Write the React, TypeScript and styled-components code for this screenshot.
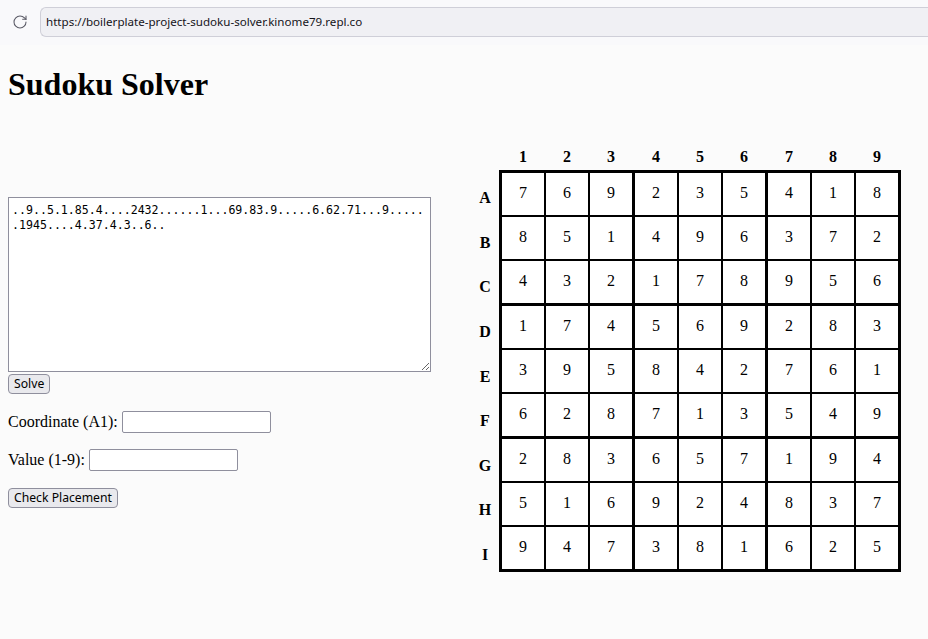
import * as React from "react";
import styled, { createGlobalStyle } from "styled-components";
import { RotateCw } from "lucide-react";

const GlobalStyle = createGlobalStyle`
  body {
    margin: 0;
    background: #fbfbfb;
    font-family: "Liberation Serif", "Times New Roman", serif;
    color: #000;
  }
`;

const PUZZLE =
  "..9..5.1.85.4....2432......1...69.83.9.....6.62.71...9......1945....4.37.4.3..6..";

const SOLUTION = [
  "769235418",
  "851496372",
  "432178956",
  "174569283",
  "395842761",
  "628713549",
  "283657194",
  "516924837",
  "947381625",
];

const ROWS = "ABCDEFGHI".split("");

const BrowserBar = styled.div`
  display: flex;
  align-items: center;
  gap: 12px;
  height: 45px;
  padding: 0 0 2px 12px;
  box-sizing: border-box;
  background: #f9f9fb;
  color: #5b5b66;
`;

const UrlBox = styled.div`
  flex: 1;
  height: 28px;
  display: flex;
  align-items: center;
  padding-left: 5px;
  border: 1px solid #cfcfd8;
  border-right: none;
  border-radius: 6px 0 0 6px;
  background: #f0f0f4;
  font-family: "Noto Sans", sans-serif;
  font-size: 11.6px;
  color: #15141a;
`;

const Page = styled.div`
  padding: 0 8px;
`;

const Title = styled.h1`
  font-size: 32px;
  font-weight: bold;
  margin: 21.44px 0;
`;

const Main = styled.div`
  display: flex;
  align-items: flex-start;
  gap: 44px;
`;

const FormColumn = styled.div`
  width: 423px;
  padding-top: 72px;
`;

const PuzzleInput = styled.textarea`
  display: block;
  width: 423px;
  height: 175px;
  box-sizing: border-box;
  padding: 5px 3px 2px;
  border: 1px solid #8f8f9d;
  background: #fff;
  font-family: "DejaVu Sans Mono", monospace;
  font-size: 11.6px;
  line-height: 15px;
  color: #000;
  line-break: anywhere;
  word-break: break-all;
`;

const Button = styled.button<{ $top: number }>`
  display: block;
  margin-top: ${(p) => p.$top}px;
  height: 20px;
  padding: 0 5px;
  border: 1px solid #8f8f9d;
  border-radius: 4px;
  background: #e9e9ed;
  font-family: "Noto Sans", sans-serif;
  font-size: 12.2px;
  color: #000;
`;

const Field = styled.p<{ $top: number }>`
  display: flex;
  align-items: center;
  gap: 4px;
  margin: ${(p) => p.$top}px 0 0;
  font-size: 16px;
`;

const TextInput = styled.input`
  width: 149px;
  height: 22px;
  box-sizing: border-box;
  border: 1px solid #8f8f9d;
  border-radius: 2px;
  background: #fff;
`;

const BoardArea = styled.div`
  display: grid;
  grid-template-columns: 20px auto;
  grid-template-rows: 24px auto;
  column-gap: 4px;
  align-items: start;
  padding-top: 21px;
`;

const ColLabels = styled.div`
  display: grid;
  grid-template-columns: repeat(3, auto);
  column-gap: 3px;
  padding: 0 3px;
`;

const ColBand = styled.div`
  display: grid;
  grid-template-columns: repeat(3, 42px);
  column-gap: 2px;
`;

const ColLabel = styled.div`
  text-align: center;
  font-weight: bold;
  font-size: 16px;
  line-height: 22px;
`;

const RowLabels = styled.div`
  display: grid;
  grid-template-rows: repeat(9, 44.6px);
  padding-top: 6px;
`;

const RowLabel = styled.div`
  display: flex;
  align-items: center;
  justify-content: center;
  font-weight: bold;
  font-size: 16px;
`;

const Board = styled.div`
  display: grid;
  grid-template-columns: repeat(3, auto);
  gap: 3px;
  padding: 3px;
  background: #000;
  justify-self: start;
  align-self: start;
`;

const Block = styled.div`
  display: grid;
  grid-template-columns: repeat(3, 42px);
  grid-template-rows: repeat(3, 42px);
  gap: 2px;
`;

const Cell = styled.div`
  display: flex;
  align-items: center;
  justify-content: center;
  background: #fff;
  font-size: 16px;
  padding-bottom: 1px;
`;

const triples = [0, 1, 2];

const App = () => {
  return (
    <>
      <GlobalStyle />
      <BrowserBar>
        <RotateCw size={16} strokeWidth={1.6} />
        <UrlBox>https://boilerplate-project-sudoku-solver.kinome79.repl.co</UrlBox>
      </BrowserBar>
      <Page>
        <Title>Sudoku Solver</Title>
        <Main>
          <FormColumn>
            <PuzzleInput defaultValue={PUZZLE} spellCheck={false} />
            <Button $top={2}>Solve</Button>
            <Field $top={17}>
              Coordinate (A1): <TextInput />
            </Field>
            <Field $top={16}>
              Value (1-9): <TextInput />
            </Field>
            <Button $top={17}>Check Placement</Button>
          </FormColumn>

          <BoardArea>
            <div />
            <ColLabels>
              {triples.map((b) => (
                <ColBand key={b}>
                  {triples.map((c) => (
                    <ColLabel key={c}>{b * 3 + c + 1}</ColLabel>
                  ))}
                </ColBand>
              ))}
            </ColLabels>
            <RowLabels>
              {ROWS.map((r) => (
                <RowLabel key={r}>{r}</RowLabel>
              ))}
            </RowLabels>
            <Board>
              {triples.map((br) =>
                triples.map((bc) => (
                  <Block key={`${br}-${bc}`}>
                    {triples.map((r) =>
                      triples.map((c) => (
                        <Cell key={`${r}-${c}`}>
                          {SOLUTION[br * 3 + r][bc * 3 + c]}
                        </Cell>
                      ))
                    )}
                  </Block>
                ))
              )}
            </Board>
          </BoardArea>
        </Main>
      </Page>
    </>
  );
};

export default App;
